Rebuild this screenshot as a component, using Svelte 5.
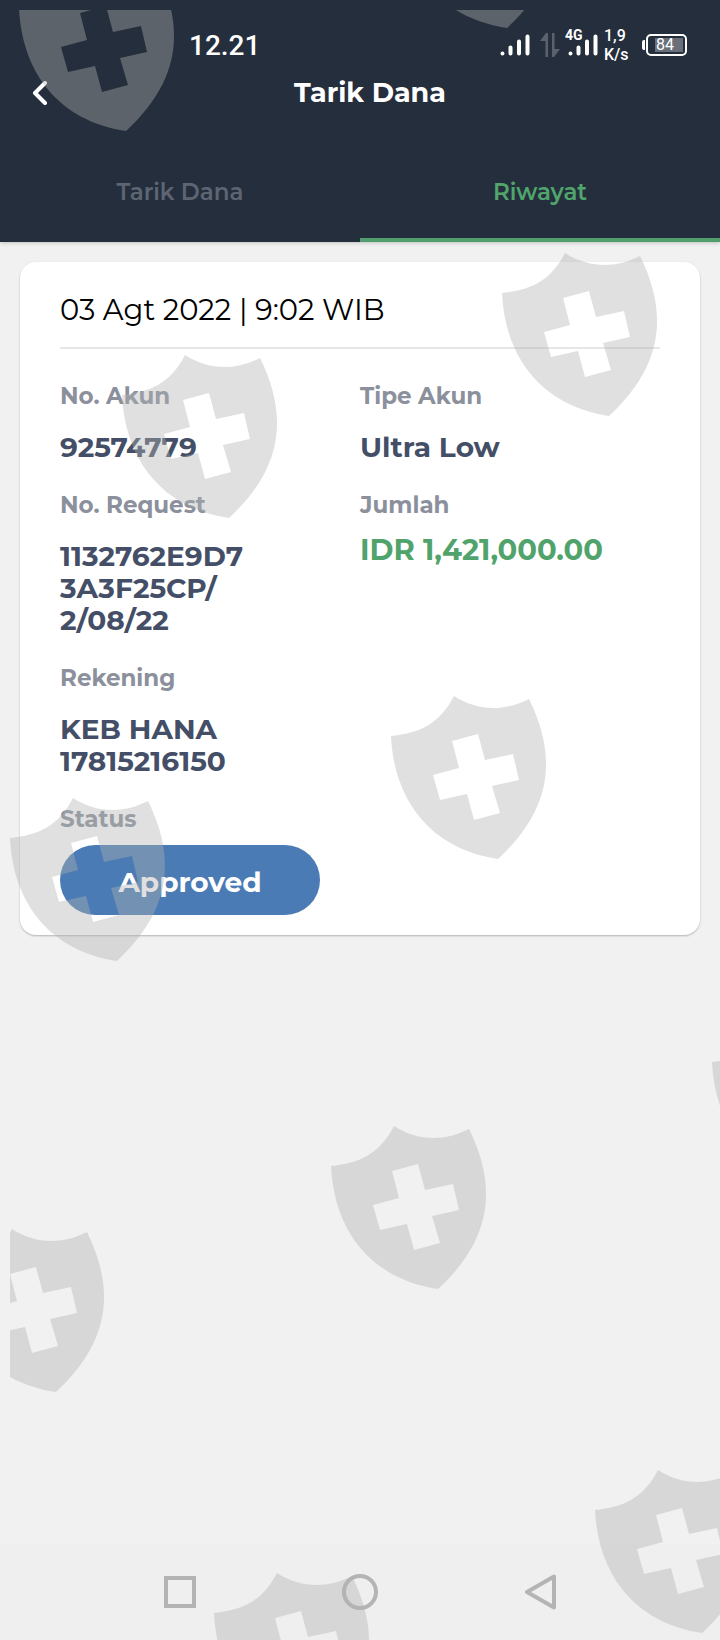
<script lang="ts">
  type Field = { label: string; lines: string[]; amount?: boolean };

  const tabs = ['Tarik Dana', 'Riwayat'];
  let active = $state('Riwayat');

  const fields: Field[] = [
    { label: 'No. Akun', lines: ['92574779'] },
    { label: 'Tipe Akun', lines: ['Ultra Low'] },
    { label: 'No. Request', lines: ['1132762E9D7', '3A3F25CP/', '2/08/22'] },
    { label: 'Jumlah', lines: ['IDR 1,421,000.00'], amount: true },
    { label: 'Rekening', lines: ['KEB HANA', '17815216150'] },
  ];

  // watermark shields, measured from the corner of the overlay
  const shields = [
    [9, -42],
    [390, -145],
    [492, 243],
    [112, 345],
    [381, 686],
    [0, 788],
    [702, 1012],
    [321, 1116],
    [-61, 1219],
    [585, 1460],
    [204, 1563],
  ];
</script>

{#snippet signal()}
  <svg class="signal" width="30" height="22" viewBox="0 0 30 22" aria-hidden="true">
    <path d="M2.5 19.5v0M10.5 13.5v6M19 7.5v12M27.5 2.5v17" stroke="currentColor" stroke-width="4" stroke-linecap="round" />
  </svg>
{/snippet}

<div class="screen">
  <header>
    <div class="status">
      <span class="clock">12.21</span>
      <div class="indicators">
        {@render signal()}
        <svg class="arrows" width="20" height="24" viewBox="0 0 20 24" aria-hidden="true">
          <path d="M0 8 6 0h2v24H5.500V8zM12 0h2.500v16H20l-6 8h-2z" fill="#5b626d" />
        </svg>
        <div class="mobile">
          <span class="network">4G</span>
          {@render signal()}
        </div>
        <div class="speed">1,9<br />K/s</div>
        <div class="battery"><span>84</span></div>
      </div>
    </div>

    <div class="title-row">
      <button class="back" aria-label="Kembali">
        <svg width="16" height="24" viewBox="0 0 16 24" fill="none" aria-hidden="true">
          <path d="M13 2 3 12l10 10" stroke="currentColor" stroke-width="4" stroke-linecap="round" stroke-linejoin="round" />
        </svg>
      </button>
      <h1>Tarik Dana</h1>
    </div>

    <nav class="tabs">
      {#each tabs as tab}
        <button class:active={active === tab} onclick={() => (active = tab)}>{tab}</button>
      {/each}
    </nav>
  </header>

  <main>
    <article class="card">
      <h2>03 Agt 2022 | 9:02 WIB</h2>
      <dl>
        {#each fields as field}
          <div class="field" class:amount={field.amount}>
            <dt>{field.label}</dt>
            <dd>
              {#each field.lines as line}
                <span>{line}</span>
              {/each}
            </dd>
          </div>
        {/each}
        <div class="field state">
          <dt>Status</dt>
          <dd class="badge">Approved</dd>
        </div>
      </dl>
    </article>
  </main>

  <footer>
    <button aria-label="Recent">
      <svg width="36" height="36" viewBox="0 0 36 36" aria-hidden="true"><rect x="4" y="4" width="28" height="28" /></svg>
    </button>
    <button aria-label="Home">
      <svg width="36" height="36" viewBox="0 0 36 36" aria-hidden="true"><circle cx="18" cy="18" r="16" /></svg>
    </button>
    <button aria-label="Back">
      <svg width="36" height="36" viewBox="0 0 36 36" aria-hidden="true"><path d="M32 2.500v31L5 18z" /></svg>
    </button>
  </footer>

  <div class="watermark" aria-hidden="true">
    <svg width="100%" height="100%">
      {#each shields as [x, y]}
        <path
          transform="translate({x} {y})"
          fill-rule="evenodd"
          d="M0 40C28 37 48 29 63 0C88 16 114 15 138 3C166 60 162 112 107 163C40 153 3 105 0 40ZM61 45 68 72 42 79 49 104 76 98 83 124 109 117 101 90 128 84 122 58 94 64 87 38Z"
        />
      {/each}
    </svg>
  </div>
</div>

<style>
  :global(body) {
    margin: 0;
    background: #f1f1f1;
  }

  .screen {
    position: relative;
    display: flex;
    flex-direction: column;
    min-height: 100vh;
    overflow: hidden;
    font-family: Montserrat, Inter, sans-serif;
    background: #f1f1f1;
  }

  button {
    padding: 0;
    border: 0;
    background: none;
    font: inherit;
    color: inherit;
    cursor: pointer;
  }

  svg {
    display: block;
  }

  header {
    background: #252e3c;
    color: #fff;
    box-shadow: 0 1px 4px rgba(0, 0, 0, 0.2);
  }

  .status {
    display: flex;
    align-items: center;
    justify-content: space-between;
    height: 50px;
    padding: 20px 33px 0 189px;
    font-family: Roboto, sans-serif;
  }

  .clock {
    font-size: 28px;
    font-weight: 500;
  }

  .indicators {
    display: flex;
    align-items: center;
  }

  .arrows {
    margin: 0 8px 0 10px;
  }

  .mobile {
    position: relative;
  }

  .network {
    position: absolute;
    top: -6px;
    left: -3px;
    font-size: 14px;
    font-weight: 700;
    line-height: 14px;
  }

  .speed {
    width: 28px;
    margin: 0 10px 0 6px;
    font-size: 16px;
    font-weight: 500;
    line-height: 19px;
  }

  .battery {
    position: relative;
    box-sizing: border-box;
    width: 41px;
    height: 22px;
    margin-left: 4px;
    padding: 2px;
    border: 2px solid #fff;
    border-radius: 5px;
  }

  .battery::before {
    content: '';
    position: absolute;
    top: 4px;
    left: -6px;
    width: 3px;
    height: 10px;
    border-radius: 2px 0 0 2px;
    background: #fff;
  }

  .battery span {
    display: block;
    margin-left: 5px;
    padding-left: 1px;
    background: #69707a;
    font-size: 16px;
    line-height: 14px;
  }

  .title-row {
    position: relative;
    display: flex;
    align-items: center;
    justify-content: center;
    height: 46px;
    padding-left: 20px;
  }

  .back {
    position: absolute;
    left: 32px;
  }

  h1 {
    margin: 0;
    font-size: 27px;
    font-weight: 700;
    line-height: 32px;
  }

  .tabs {
    display: grid;
    grid-template-columns: 1fr 1fr;
  }

  .tabs button {
    padding: 62px 0 32px;
    border-bottom: 4px solid transparent;
    font-size: 23px;
    font-weight: 600;
    line-height: 28px;
    color: #5d6573;
  }

  .tabs .active {
    border-color: #4f9e6c;
    color: #4fa56c;
  }

  main {
    flex: 1;
    padding: 20px;
  }

  .card {
    padding: 20px 40px;
    border-radius: 16px;
    background: #fff;
    box-shadow: 0 1px 2px rgba(0, 0, 0, 0.25);
  }

  h2 {
    margin: 0;
    padding-bottom: 9px;
    border-bottom: 2px solid #e6e6e6;
    font-size: 29px;
    font-weight: 400;
    line-height: 56px;
    color: #000;
  }

  dl {
    display: grid;
    grid-template-columns: 1fr 1fr;
    row-gap: 28px;
    margin: 33px 0 0;
  }

  .field {
    display: flex;
    flex-direction: column;
    gap: 21px;
  }

  .amount {
    gap: 15px;
  }

  dt {
    font-size: 23px;
    font-weight: 700;
    line-height: 28px;
    color: #8b909c;
  }

  dd {
    margin: 0;
    font-size: 28px;
    font-weight: 700;
    line-height: 32px;
    color: #444f67;
  }

  dd span {
    display: block;
  }

  .amount dd {
    font-size: 29px;
    color: #4fa36b;
  }

  .state {
    grid-column: 1;
    gap: 12px;
  }

  .badge {
    width: 260px;
    padding: 21px 0 17px;
    border-radius: 35px;
    background: #4b7bb5;
    color: #fff;
    text-align: center;
  }

  footer {
    display: flex;
    justify-content: center;
    height: 96px;
    background: #efefef;
  }

  footer button {
    display: grid;
    place-items: center;
    width: 25%;
  }

  footer svg {
    fill: none;
    stroke: #b4b4b4;
    stroke-width: 4px;
    stroke-linejoin: round;
  }

  footer rect {
    stroke-linejoin: miter;
  }

  .watermark {
    position: absolute;
    inset: 10px 0 0 10px;
    overflow: hidden;
    fill: #b0b2b0;
    opacity: 0.4;
    pointer-events: none;
  }
</style>
